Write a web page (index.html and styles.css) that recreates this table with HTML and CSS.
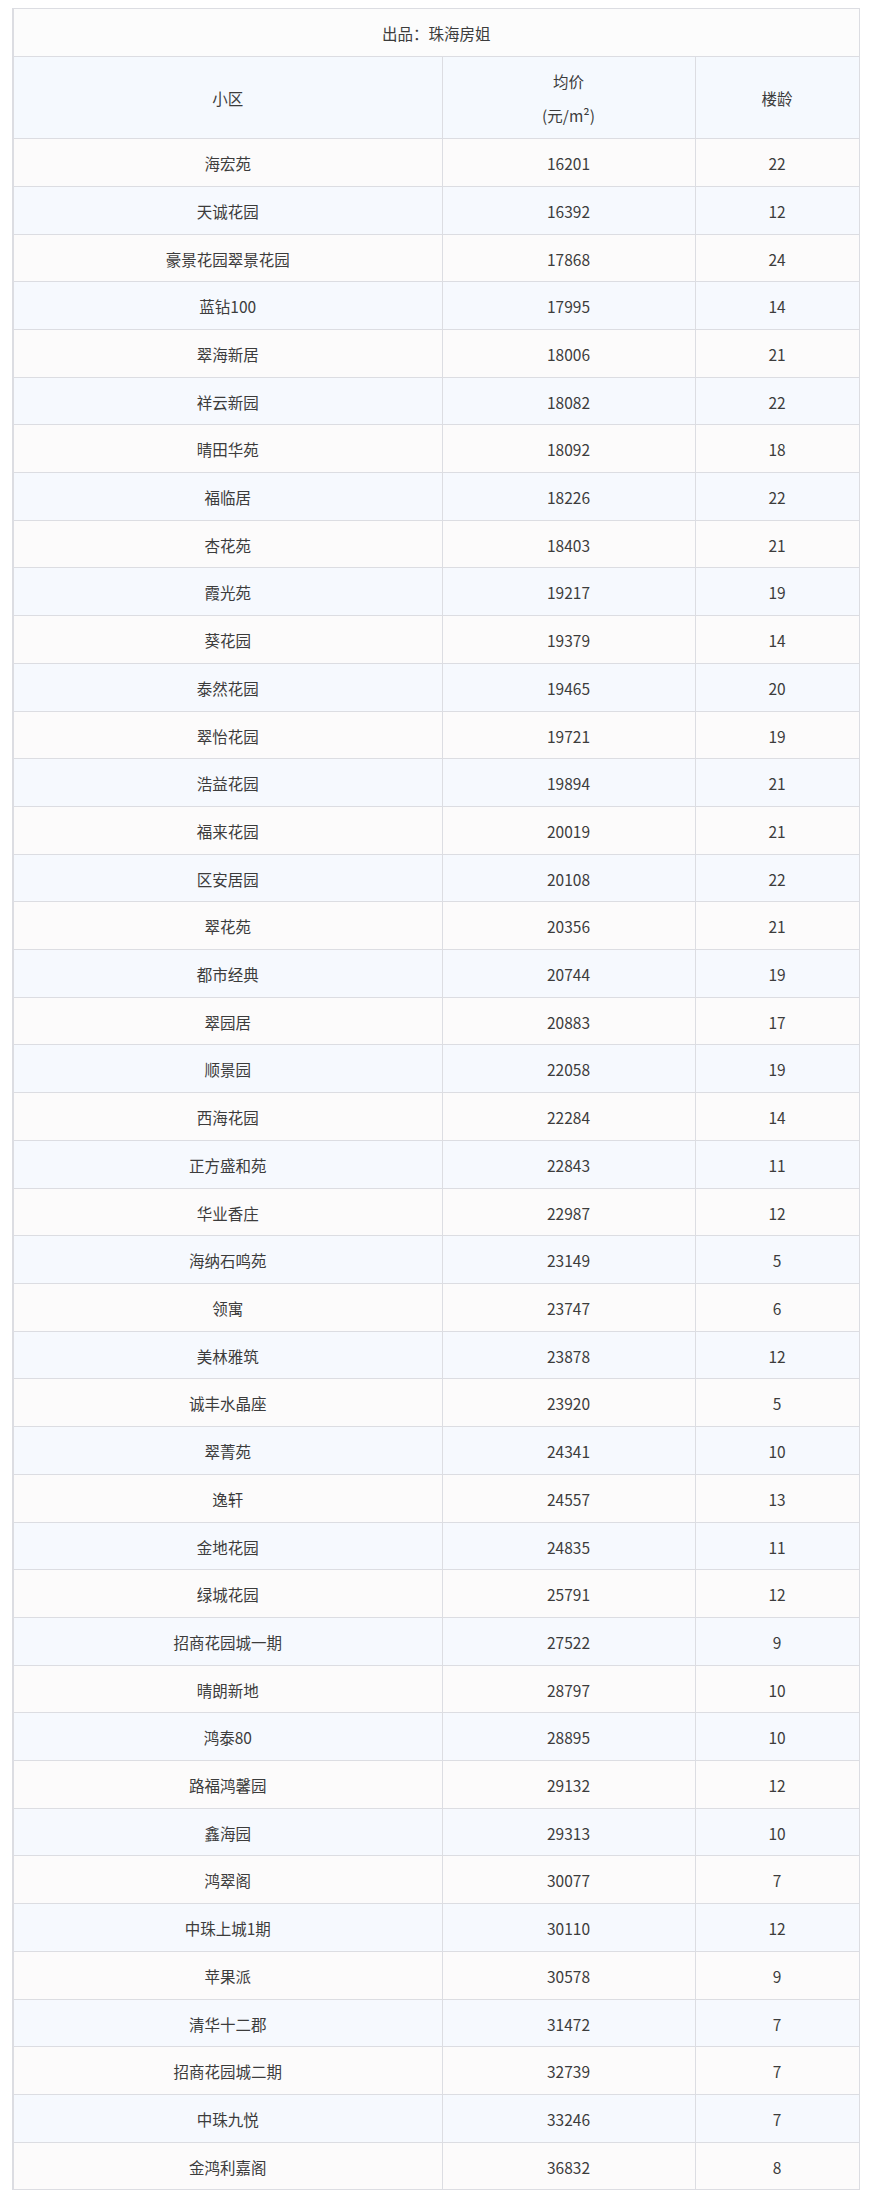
FILE: index.html
```html
<!DOCTYPE html>
<html lang="zh-CN">
<head>
<meta charset="utf-8">
<title>珠海小区均价</title>
<link rel="stylesheet" href="styles.css">
</head>
<body>
<table class="price-table">
  <colgroup>
    <col class="col-name">
    <col class="col-price">
    <col class="col-age">
  </colgroup>
  <thead>
    <tr class="title-row"><th colspan="3">出品：珠海房姐</th></tr>
    <tr class="head-row">
      <th>小区</th>
      <th>均价<br>(元/m²)</th>
      <th>楼龄</th>
    </tr>
  </thead>
  <tbody>
    <tr><td>海宏苑</td><td>16201</td><td>22</td></tr>
    <tr><td>天诚花园</td><td>16392</td><td>12</td></tr>
    <tr><td>豪景花园翠景花园</td><td>17868</td><td>24</td></tr>
    <tr><td>蓝钻100</td><td>17995</td><td>14</td></tr>
    <tr><td>翠海新居</td><td>18006</td><td>21</td></tr>
    <tr><td>祥云新园</td><td>18082</td><td>22</td></tr>
    <tr><td>晴田华苑</td><td>18092</td><td>18</td></tr>
    <tr><td>福临居</td><td>18226</td><td>22</td></tr>
    <tr><td>杏花苑</td><td>18403</td><td>21</td></tr>
    <tr><td>霞光苑</td><td>19217</td><td>19</td></tr>
    <tr><td>葵花园</td><td>19379</td><td>14</td></tr>
    <tr><td>泰然花园</td><td>19465</td><td>20</td></tr>
    <tr><td>翠怡花园</td><td>19721</td><td>19</td></tr>
    <tr><td>浩益花园</td><td>19894</td><td>21</td></tr>
    <tr><td>福来花园</td><td>20019</td><td>21</td></tr>
    <tr><td>区安居园</td><td>20108</td><td>22</td></tr>
    <tr><td>翠花苑</td><td>20356</td><td>21</td></tr>
    <tr><td>都市经典</td><td>20744</td><td>19</td></tr>
    <tr><td>翠园居</td><td>20883</td><td>17</td></tr>
    <tr><td>顺景园</td><td>22058</td><td>19</td></tr>
    <tr><td>西海花园</td><td>22284</td><td>14</td></tr>
    <tr><td>正方盛和苑</td><td>22843</td><td>11</td></tr>
    <tr><td>华业香庄</td><td>22987</td><td>12</td></tr>
    <tr><td>海纳石鸣苑</td><td>23149</td><td>5</td></tr>
    <tr><td>领寓</td><td>23747</td><td>6</td></tr>
    <tr><td>美林雅筑</td><td>23878</td><td>12</td></tr>
    <tr><td>诚丰水晶座</td><td>23920</td><td>5</td></tr>
    <tr><td>翠菁苑</td><td>24341</td><td>10</td></tr>
    <tr><td>逸轩</td><td>24557</td><td>13</td></tr>
    <tr><td>金地花园</td><td>24835</td><td>11</td></tr>
    <tr><td>绿城花园</td><td>25791</td><td>12</td></tr>
    <tr><td>招商花园城一期</td><td>27522</td><td>9</td></tr>
    <tr><td>晴朗新地</td><td>28797</td><td>10</td></tr>
    <tr><td>鸿泰80</td><td>28895</td><td>10</td></tr>
    <tr><td>路福鸿馨园</td><td>29132</td><td>12</td></tr>
    <tr><td>鑫海园</td><td>29313</td><td>10</td></tr>
    <tr><td>鸿翠阁</td><td>30077</td><td>7</td></tr>
    <tr><td>中珠上城1期</td><td>30110</td><td>12</td></tr>
    <tr><td>苹果派</td><td>30578</td><td>9</td></tr>
    <tr><td>清华十二郡</td><td>31472</td><td>7</td></tr>
    <tr><td>招商花园城二期</td><td>32739</td><td>7</td></tr>
    <tr><td>中珠九悦</td><td>33246</td><td>7</td></tr>
    <tr><td>金鸿利嘉阁</td><td>36832</td><td>8</td></tr>
  </tbody>
</table>
</body>
</html>
```

FILE: styles.css
```css
html, body {
  background: #ffffff;
}

body {
  margin: 8px 8px 8px 12px;
  font-family: "Noto Sans CJK SC", "Noto Sans", sans-serif;
  font-size: 15.5px;
  color: #3c3c3c;
}

.price-table {
  width: 846px;
  border-collapse: collapse;
  table-layout: fixed;
  border: 1px solid #dcdde2;
  border-left-width: 2px;
}

.col-name { width: 429px; }
.col-price { width: 253px; }
.col-age { width: 164px; }

.price-table th,
.price-table td {
  border: 1px solid #dcdde2;
  text-align: center;
  font-weight: normal;
  line-height: 34.7px;
  padding: 7px 6px 5px;
  vertical-align: middle;
}

.title-row th {
  background: #fcfcfc;
}

.head-row th {
  background: #f5f9fe;
}

.price-table tbody tr:nth-child(odd) td {
  background: #fcfbfb;
}

.price-table tbody tr:nth-child(even) td {
  background: #f6f9fe;
}
```
